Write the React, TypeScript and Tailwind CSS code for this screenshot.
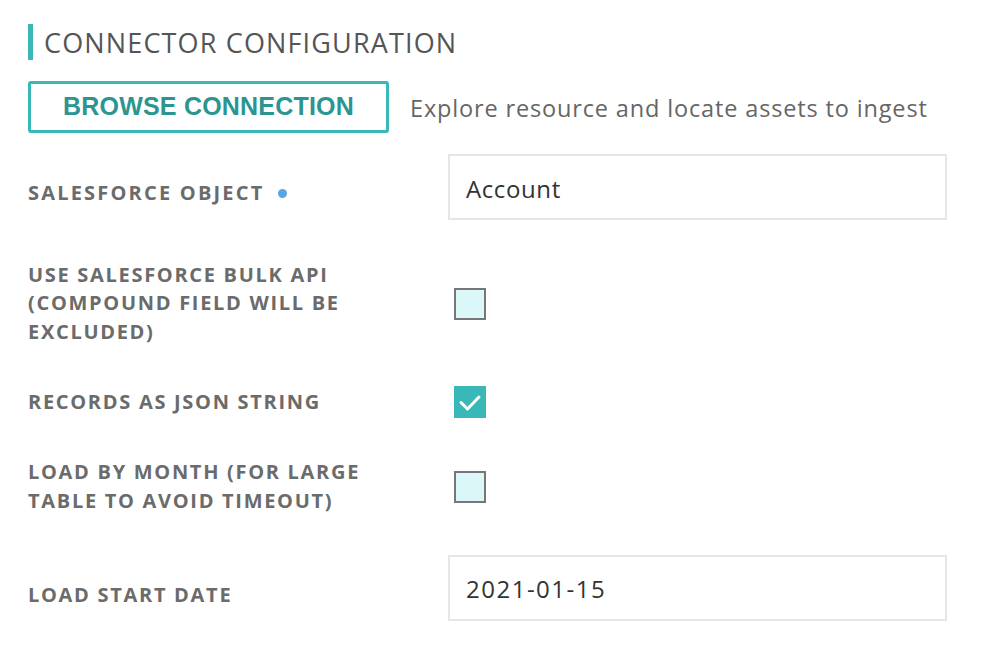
import React from "react";

const labelCls = "w-[420px] shrink-0 text-[20px] font-bold leading-[28.5px] text-[#6b6b6b] tracking-[1.7px]";

function Check({ checked }: { checked?: boolean }) {
  if (checked) {
    return (
      <div className="ml-[6px] w-[32px] h-[32px] bg-[#3ab8b7] flex items-center justify-center">
        <svg width="24" height="24" viewBox="0 0 24 24" fill="none">
          <path d="M3 12.5 L9.5 19 L21 7" stroke="white" strokeWidth="3" strokeLinecap="round" strokeLinejoin="round" />
        </svg>
      </div>
    );
  }
  return <div className="ml-[6px] w-[32px] h-[32px] bg-[#dcf7f7] border-2 border-[#777777]" />;
}

export default function App() {
  return (
    <div className="w-[988px] h-[654px] bg-white pl-[28px] pt-[24px]" style={{ fontFamily: '"Open Sans", "Noto Sans", sans-serif' }}>
      <div className="flex items-center h-[36px]">
        <div className="w-[5px] h-[36px] bg-[#3ab8b7]" />
        <div className="ml-[11px] text-[27px] text-[#555555] leading-none tracking-[1.15px]">CONNECTOR CONFIGURATION</div>
      </div>
      <div className="flex items-center mt-[21px]">
        <div className="w-[361px] h-[52px] border-[3px] border-[#3ab8b7] rounded-[3px] flex items-center justify-center">
          <span className="text-[25px] font-bold text-[#2b9591] tracking-[0.2px]" style={{ fontFamily: '"Liberation Sans", Arial, sans-serif' }}>BROWSE CONNECTION</span>
        </div>
        <div className="ml-[21px] pt-[4px] text-[23.5px] text-[#666666] tracking-[0.85px]">Explore resource and locate assets to ingest</div>
      </div>

      <div className="flex items-center mt-[21px] h-[66px]">
        <div className={labelCls + " flex items-center pt-[12px] tracking-[2.2px]"}>
          SALESFORCE OBJECT
          <span className="ml-[14px] inline-block w-[9px] h-[9px] rounded-full bg-[#5aa6e2]" />
        </div>
        <div className="w-[499px] h-[66px] border-2 border-[#e6e6e6] flex items-center pl-[16px] pt-[3px] text-[24px] text-[#333333] tracking-[0.6px]">Account</div>
      </div>

      <div className="flex items-center mt-[42px] h-[83px]">
        <div className={labelCls}>
          USE SALESFORCE BULK API
          <br />
          (COMPOUND FIELD WILL BE
          <br />
          EXCLUDED)
        </div>
        <Check />
      </div>

      <div className="flex items-center mt-[41px] h-[32px]">
        <div className={labelCls}>RECORDS AS JSON STRING</div>
        <Check checked />
      </div>

      <div className="flex items-center mt-[40px] h-[57px]">
        <div className={labelCls}>
          LOAD BY MONTH (FOR LARGE
          <br />
          TABLE TO AVOID TIMEOUT)
        </div>
        <Check />
      </div>

      <div className="flex items-center mt-[40px] h-[66px]">
        <div className={labelCls + " pt-[14px]"}>LOAD START DATE</div>
        <div className="w-[499px] h-[66px] border-2 border-[#e6e6e6] flex items-center pl-[16px] pt-[2px] text-[24px] text-[#333333] tracking-[1.5px]">2021-01-15</div>
      </div>
    </div>
  );
}
